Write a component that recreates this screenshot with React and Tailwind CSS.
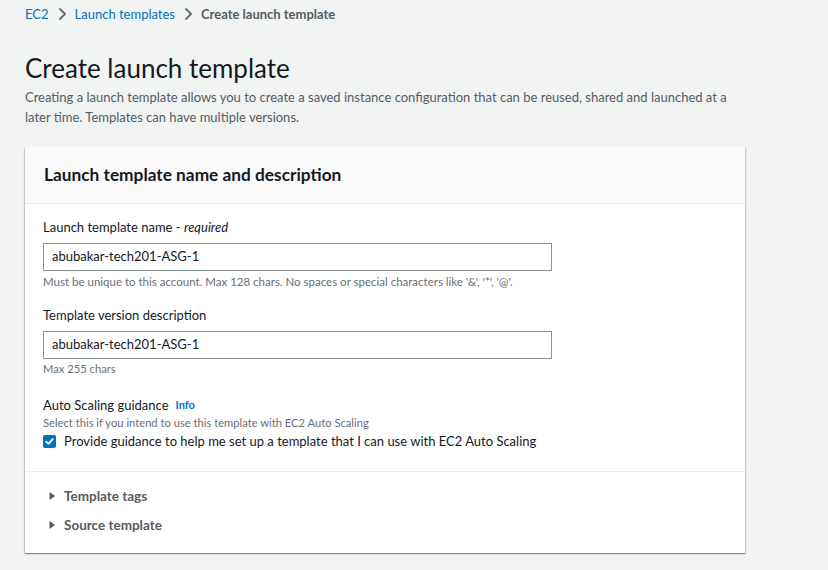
import React from "react";

function Chevron() {
  return (
    <svg width="16" height="16" viewBox="0 0 16 16" className="mx-[5px]" fill="none">
      <path d="M6 3l5 5-5 5" stroke="#687078" strokeWidth="2" strokeLinejoin="round" strokeLinecap="round" />
    </svg>
  );
}

function Caret() {
  return (
    <svg width="9" height="10" viewBox="0 0 9 10" className="mr-[7px]">
      <path d="M1.5 1 L7 5 L1.5 9 Z" fill="#545b64" />
    </svg>
  );
}

export default function App() {
  return (
    <div
      className="min-h-[570px] w-full bg-[#f2f3f3] text-[#16191f]"
      style={{ fontFamily: 'Lato, "Open Sans", Arial, sans-serif' }}
    >
      <div className="w-[760px] pl-[25px]">
        <nav className="flex h-[28px] items-center text-[13px] leading-[20px]">
          <span className="text-[#0073bb]">EC2</span>
          <Chevron />
          <span className="text-[#0073bb]">Launch templates</span>
          <Chevron />
          <span className="font-bold text-[#545b64]">Create launch template</span>
        </nav>

        <h1 className="mt-[23px] text-[26px] leading-[34px] font-normal text-[#16191f]">
          Create launch template
        </h1>
        <p className="mt-[2px] text-[13px] leading-[20px] text-[#545b64]">
          Creating a launch template allows you to create a saved instance configuration that can be reused, shared and launched at a
          <br />
          later time. Templates can have multiple versions.
        </p>

        <div className="mt-[20px] w-[720px] bg-white shadow-[0_1px_1px_0_rgba(0,28,36,0.3),1px_1px_1px_0_rgba(0,28,36,0.15),-1px_1px_1px_0_rgba(0,28,36,0.15)]">
          <div className="flex h-[57px] items-center border-b border-[#eaeded] bg-[#fafafa] px-[19px]">
            <h2 className="text-[17.3px] font-bold leading-[22px] text-[#16191f]">
              Launch template name and description
            </h2>
          </div>

          <div className="px-[18px] pt-[13px] pb-[20px]">
            <div>
              <div className="text-[13px] leading-[20px] text-[#16191f]">
                Launch template name - <i>required</i>
              </div>
              <div className="mt-[6px] flex h-[28px] w-[509px] items-center border border-[#879596] px-[8px] text-[13px] text-[#16191f]">
                abubakar-tech201-ASG-1
              </div>
              <div className="mt-[3px] text-[11.5px] leading-[16px] text-[#687078]">
                Must be unique to this account. Max 128 chars. No spaces or special characters like '&amp;', '*', '@'.
              </div>
            </div>

            <div className="mt-[15px]">
              <div className="text-[13px] leading-[20px] text-[#16191f]">Template version description</div>
              <div className="mt-[6px] flex h-[28px] w-[509px] items-center border border-[#879596] px-[8px] text-[13px] text-[#16191f]">
                abubakar-tech201-ASG-1
              </div>
              <div className="mt-[2px] text-[11.2px] leading-[16px] text-[#687078]">Max 255 chars</div>
            </div>

            <div className="mt-[18px]">
              <div className="flex items-center text-[13px] leading-[20px] text-[#16191f]">
                Auto Scaling guidance
                <span className="ml-[7px] text-[11px] font-bold text-[#0073bb]">Info</span>
              </div>
              <div className="text-[11.2px] leading-[16px] text-[#687078]">
                Select this if you intend to use this template with EC2 Auto Scaling
              </div>
              <div className="flex items-center text-[13px] leading-[20px]">
                <span className="mr-[8px] flex h-[13px] w-[13px] items-center justify-center rounded-[2px] bg-[#0073bb]">
                  <svg width="11" height="11" viewBox="0 0 11 11" fill="none">
                    <path d="M2.2 5.7l2.2 2.2 4.4-4.8" stroke="white" strokeWidth="1.8" strokeLinecap="round" strokeLinejoin="round" />
                  </svg>
                </span>
                Provide guidance to help me set up a template that I can use with EC2 Auto Scaling
              </div>
            </div>
          </div>

          <div className="border-t border-[#eaeded] px-[23px] pt-[14px] pb-[18px]">
            <div className="flex h-[20px] items-center text-[13.5px] font-bold text-[#545b64]">
              <Caret />
              Template tags
            </div>
            <div className="mt-[9px] flex h-[20px] items-center text-[13.5px] font-bold text-[#545b64]">
              <Caret />
              Source template
            </div>
          </div>
        </div>
      </div>
    </div>
  );
}
